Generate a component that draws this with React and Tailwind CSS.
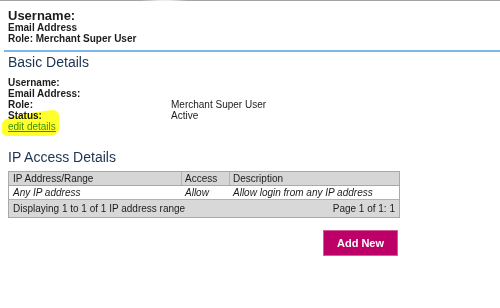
const details = [
  { label: 'Username:', value: '' },
  { label: 'Email Address:', value: '' },
  { label: 'Role:', value: 'Merchant Super User' },
  { label: 'Status:', value: 'Active' },
];

function Highlight() {
  return (
    <svg
      className="pointer-events-none absolute left-0 top-[108px] mix-blend-multiply"
      width="64"
      height="30"
      viewBox="0 0 64 30"
    >
      <path
        d="M2 16 C3 10 14 8 30 5 L52 2 C58 2 60 6 59 10 L59 22 C58 27 52 28 40 28 L8 28 C3 28 1 25 2 20 Z"
        fill="#ffff2e"
      />
    </svg>
  );
}

export default function App() {
  return (
    <div
      className="relative h-[308px] w-[500px] overflow-hidden bg-white text-[#1c1c1c]"
      style={{ fontFamily: '"Liberation Sans", Arial, sans-serif' }}
    >
      <div className="h-px w-full bg-[linear-gradient(to_right,#a3a3a3_140px,#ececec_160px,#ececec_170px,#a3a3a3_188px)]" />

      <div className="px-2 pt-2">
        <div className="text-[13px] font-bold leading-[13px]">Username:</div>
        <div className="text-[10px] font-bold leading-[11px]">Email Address</div>
        <div className="text-[10px] font-bold leading-[11px]">Role: Merchant Super User</div>
      </div>

      <div className="ml-1 mt-[6px] h-[2px] bg-[#7bb8ee]" />

      <div className="px-2">
        <h2 className="mt-[2px] text-[14px] leading-4 text-[#1b3350]">Basic Details</h2>
        <div className="mt-[7px] text-[10px] leading-[11px]">
          {details.map((d) => (
            <div key={d.label} className="flex">
              <span className="w-[163px] font-bold">{d.label}</span>
              <span>{d.value}</span>
            </div>
          ))}
          <a href="#" className="block leading-3 text-[#3f8f1c] underline">
            edit details
          </a>
        </div>

        <h2 className="mt-4 text-[14px] leading-4 text-[#1b3350]">IP Access Details</h2>

        <div className="mt-[6px] w-[392px] border border-[#a9a9a9] text-[10px] leading-[13px]">
          <div className="grid grid-cols-[172px_48px_1fr] border-b border-[#a9a9a9] bg-[#d6d6d6]">
            <div className="px-[4px]">IP Address/Range</div>
            <div className="border-l border-[#b4b4b4] px-[3px]">Access</div>
            <div className="border-l border-[#b4b4b4] px-[3px]">Description</div>
          </div>
          <div className="grid grid-cols-[172px_48px_1fr] border-b border-[#a9b3c2] bg-white italic">
            <div className="px-[4px]">Any IP address</div>
            <div className="px-[4px]">Allow</div>
            <div className="px-[4px]">Allow login from any IP address</div>
          </div>
          <div className="flex h-[17px] items-center justify-between bg-[#d8d8d8] px-[4px]">
            <span>Displaying 1 to 1 of 1 IP address range</span>
            <span>Page 1 of 1: 1</span>
          </div>
        </div>

        <div className="mt-3 flex w-[392px] justify-end pr-[2px]">
          <button
            type="button"
            className="h-[26px] w-[75px] border border-[#d75a9a] bg-[#bd0068] text-[11px] font-bold text-white"
          >
            Add New
          </button>
        </div>
      </div>

      <Highlight />
    </div>
  );
}
